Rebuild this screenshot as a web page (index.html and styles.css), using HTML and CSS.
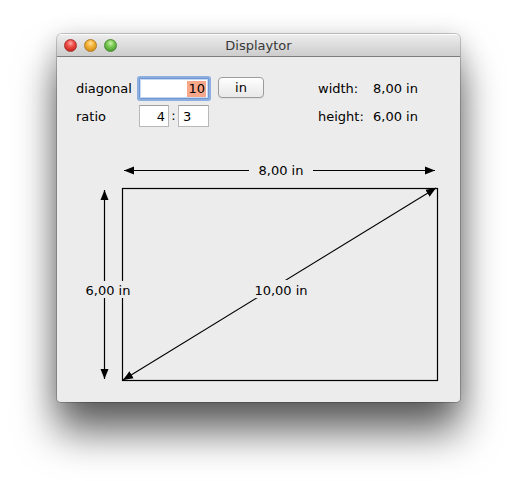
FILE: index.html
```html
<!DOCTYPE html>
<html>
<head>
<meta charset="utf-8">
<title>Displaytor</title>
<link rel="stylesheet" href="styles.css">
</head>
<body>
<div class="window">
  <div class="titlebar">
    <div class="lights">
      <span class="light red"></span>
      <span class="light yellow"></span>
      <span class="light green"></span>
    </div>
    <div class="title">Displaytor</div>
    <div></div>
  </div>
  <div class="content">
    <div class="form">
      <div class="label r1">diagonal</div>
      <div class="field focus r1 c2"><span class="sel">10</span></div>
      <div class="button r1">in</div>
      <div class="label r1 c6">width:</div>
      <div class="value r1 c7">8,00 in</div>

      <div class="label r2">ratio</div>
      <div class="ratio r2 c2">
        <div class="field small right">4</div>
        <div class="colon">:</div>
        <div class="field small left">3</div>
      </div>
      <div class="label r2 c6">height:</div>
      <div class="value r2 c7">6,00 in</div>
    </div>
    <svg class="diagram" width="403" height="245" viewBox="0 0 403 245">
      <defs>
        <marker id="ah" markerUnits="userSpaceOnUse" markerWidth="11" markerHeight="9" refX="10" refY="4.5" orient="auto-start-reverse">
          <path d="M0,0.5 L10,4.5 L0,8.5 Z" fill="#000"/>
        </marker>
      </defs>
      <rect x="65.5" y="38.5" width="315" height="192" fill="none" stroke="#000" stroke-width="1.2"/>
      <line x1="67" y1="20.5" x2="378" y2="20.5" stroke="#000" stroke-width="1.2" marker-start="url(#ah)" marker-end="url(#ah)"/>
      <line x1="47.5" y1="40" x2="47.5" y2="229" stroke="#000" stroke-width="1.2" marker-start="url(#ah)" marker-end="url(#ah)"/>
      <line x1="66" y1="230" x2="379" y2="38" stroke="#000" stroke-width="1.1" marker-start="url(#ah)" marker-end="url(#ah)"/>
      <rect x="192" y="10" width="64" height="20" fill="#ececec"/>
      <rect x="29" y="131" width="45" height="17" fill="#ececec"/>
      <rect x="197" y="130" width="54" height="18" fill="#ececec"/>
      <text class="dlabel" x="224" y="25">8,00 in</text>
      <text class="dlabel" x="51" y="145">6,00 in</text>
      <text class="dlabel" x="224" y="145">10,00 in</text>
    </svg>
  </div>
</div>
</body>
</html>
```

FILE: styles.css
```css
html, body {
  margin: 0;
  padding: 0;
  background: #ffffff;
}
body {
  font-family: "DejaVu Sans", "Liberation Sans", sans-serif;
  font-size: 12.5px;
  color: #000;
  min-height: 481px;
  padding: 34px 0 0 57px;
  box-sizing: border-box;
}
.window {
  width: 403px;
  height: 368px;
  background: #ececec;
  border-radius: 5px 5px 4px 4px;
  box-shadow: 0 0 0 1px rgba(0,0,0,0.2), 0 30px 40px rgba(0,0,0,0.6), 0 4px 26px rgba(0,0,0,0.18);
  overflow: hidden;
}
.titlebar {
  height: 22px;
  border-bottom: 1px solid #7d7d7d;
  background: linear-gradient(#eeeeee, #d9d9d9 60%, #cdcdcd);
  display: grid;
  grid-template-columns: 1fr auto 1fr;
  align-items: center;
  box-shadow: inset 0 1px 0 rgba(255,255,255,0.8);
}
.lights {
  display: flex;
  gap: 7px;
  padding-left: 7px;
  padding-top: 1px;
}
.light {
  width: 13px;
  height: 13px;
  border-radius: 50%;
  box-sizing: border-box;
}
.red {
  background: radial-gradient(circle at 50% 30%, #ffb0a8 0%, #f0524a 35%, #c8261f 80%, #a0160f 100%);
  border: 1px solid #a8342e;
}
.yellow {
  background: radial-gradient(circle at 50% 30%, #ffe2a0 0%, #f5b63c 35%, #d6901a 80%, #b0700c 100%);
  border: 1px solid #b07c26;
}
.green {
  background: radial-gradient(circle at 50% 30%, #cff5b0 0%, #7fcb56 35%, #4fa030 80%, #2f7a1c 100%);
  border: 1px solid #4b8a35;
}
.title {
  color: #383838;
  font-size: 13px;
  padding-top: 1px;
}
.content {
  height: 345px;
}
.form {
  display: grid;
  grid-template-columns: 63px 70px 9px 46px 54px 55px auto;
  grid-template-rows: 21px 22px;
  row-gap: 6px;
  padding: 21px 0 0 19px;
  align-items: center;
}
.r1 { grid-row: 1; }
.r2 { grid-row: 2; }
.c2 { grid-column: 2; }
.c6 { grid-column: 6; }
.c7 { grid-column: 7; }
.label {
  font-size: 13px;
}
.value {
  font-size: 13px;
}
.field {
  background: #fff;
  box-sizing: border-box;
  font-size: 13px;
  display: flex;
  align-items: center;
}
.focus {
  height: 21px;
  border: 1px solid #6f96cf;
  box-shadow: 0 0 0 2px rgba(125,165,222,0.85), inset 0 0 0 1px rgba(160,190,235,0.6);
  border-radius: 1px;
  justify-content: flex-end;
  padding-right: 2px;
  align-self: start;
}
.sel {
  background: #f7a88a;
  padding: 0 1px;
  line-height: 16px;
}
.button {
  grid-column: 4;
  height: 21px;
  margin-top: -1px;
  align-self: start;
  box-sizing: border-box;
  border: 1px solid #9c9c9c;
  border-radius: 4px;
  background: linear-gradient(#ffffff, #f3f3f3 50%, #e8e8e8);
  box-shadow: 0 1px 0 rgba(0,0,0,0.06);
  font-size: 13px;
  display: flex;
  align-items: center;
  justify-content: center;
  padding-bottom: 1px;
}
.ratio {
  display: flex;
  height: 22px;
}
.small {
  height: 22px;
  border: 1px solid #b8b8b8;
  border-top-color: #9e9e9e;
}
.ratio .right {
  width: 30px;
  justify-content: flex-end;
  padding-right: 3px;
}
.ratio .left {
  width: 31px;
  padding-left: 4px;
}
.colon {
  width: 9px;
  text-align: center;
  font-size: 13px;
  line-height: 22px;
}
.diagram {
  display: block;
  margin-top: 23px;
}
.dlabel {
  font-family: "DejaVu Sans", "Liberation Sans", sans-serif;
  font-size: 13px;
  text-anchor: middle;
  fill: #000;
}
```
